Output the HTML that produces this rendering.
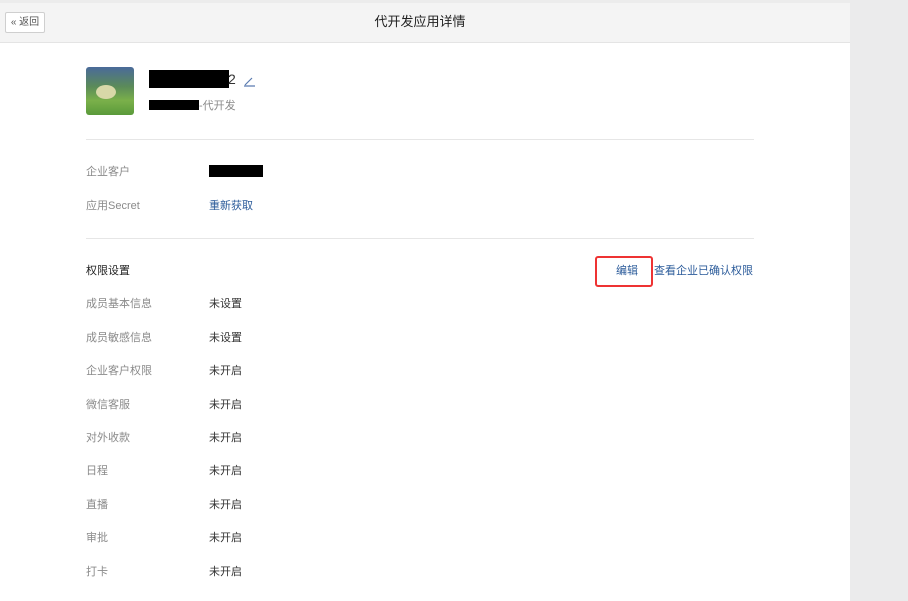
<!DOCTYPE html>
<html><head><meta charset="utf-8"><style>
*{margin:0;padding:0;box-sizing:border-box}
body{width:908px;height:601px;background:#ebebec;font-family:"Liberation Sans","Noto Sans CJK SC",sans-serif;font-size:11px;position:relative;overflow:hidden}
#main{position:absolute;left:0;top:0;width:850px;height:601px;background:#fff}
#hd{position:absolute;left:0;top:0;width:850px;height:43px;background:#f4f4f4;border-bottom:1px solid #e4e4e4;border-top:3px solid #ececec}
.a{position:absolute;white-space:nowrap;line-height:14px}
.lbl{color:#8a8a8a}
.val{color:#333}
.lnk{color:#2b5b9a}
.hr{position:absolute;left:86px;width:668px;height:1px;background:#e6e6e6}
.blk{position:absolute;background:#000}
</style></head><body>
<div id="main">
<div id="hd"></div>
<div class="a" style="left:5px;top:12px;width:40px;height:21px;border:1px solid #cfcfcf;background:#fff;border-radius:2px;color:#555;font-size:10px;line-height:19px;text-align:center">« 返回</div>
<div class="a" style="left:0;width:840px;text-align:center;top:15px;font-size:13px;color:#222">代开发应用详情</div>
<div style="position:absolute;left:86px;top:67px;width:48px;height:48px;border-radius:3px;background:linear-gradient(180deg,#4a6a9a 0%,#5a8a5a 40%,#7ab04a 70%,#5a9a3a 100%)"><div style="position:absolute;left:10px;top:18px;width:20px;height:14px;border-radius:50%;background:#d8d8a8"></div></div>
<div class="blk" style="left:149px;top:70px;width:80px;height:18px"></div>
<div class="a" style="left:228px;top:72px;font-size:14px;color:#333">2</div>
<svg style="position:absolute;left:243px;top:75px" width="13" height="12"><path d="M2 10 L9 3 M1 11 H12" stroke="#5a7bb0" stroke-width="1.2" fill="none"/></svg>
<div class="blk" style="left:149px;top:100px;width:50px;height:10px"></div>
<div class="a lbl" style="left:199px;top:99px">-代开发</div>
<div class="hr" style="top:139px"></div>
<div class="a lbl" style="left:86px;top:165px">企业客户</div>
<div class="blk" style="left:209px;top:165px;width:54px;height:12px"></div>
<div class="a lbl" style="left:86px;top:199px">应用Secret</div>
<div class="a lnk" style="left:209px;top:199px">重新获取</div>
<div class="hr" style="top:238px"></div>
<div class="a" style="left:86px;top:264px;color:#222">权限设置</div>
<div style="position:absolute;left:595px;top:256px;width:58px;height:31px;border:2px solid #e33;border-radius:3px"></div>
<div class="a lnk" style="left:616px;top:264px">编辑</div>
<div class="a lnk" style="left:654px;top:264px">查看企业已确认权限</div>
<div class="a lbl" style="left:86px;top:297px">成员基本信息</div><div class="a val" style="left:209px;top:297px">未设置</div>
<div class="a lbl" style="left:86px;top:331px">成员敏感信息</div><div class="a val" style="left:209px;top:331px">未设置</div>
<div class="a lbl" style="left:86px;top:364px">企业客户权限</div><div class="a val" style="left:209px;top:364px">未开启</div>
<div class="a lbl" style="left:86px;top:398px">微信客服</div><div class="a val" style="left:209px;top:398px">未开启</div>
<div class="a lbl" style="left:86px;top:431px">对外收款</div><div class="a val" style="left:209px;top:431px">未开启</div>
<div class="a lbl" style="left:86px;top:464px">日程</div><div class="a val" style="left:209px;top:464px">未开启</div>
<div class="a lbl" style="left:86px;top:498px">直播</div><div class="a val" style="left:209px;top:498px">未开启</div>
<div class="a lbl" style="left:86px;top:531px">审批</div><div class="a val" style="left:209px;top:531px">未开启</div>
<div class="a lbl" style="left:86px;top:565px">打卡</div><div class="a val" style="left:209px;top:565px">未开启</div>
</div>
</body></html>
